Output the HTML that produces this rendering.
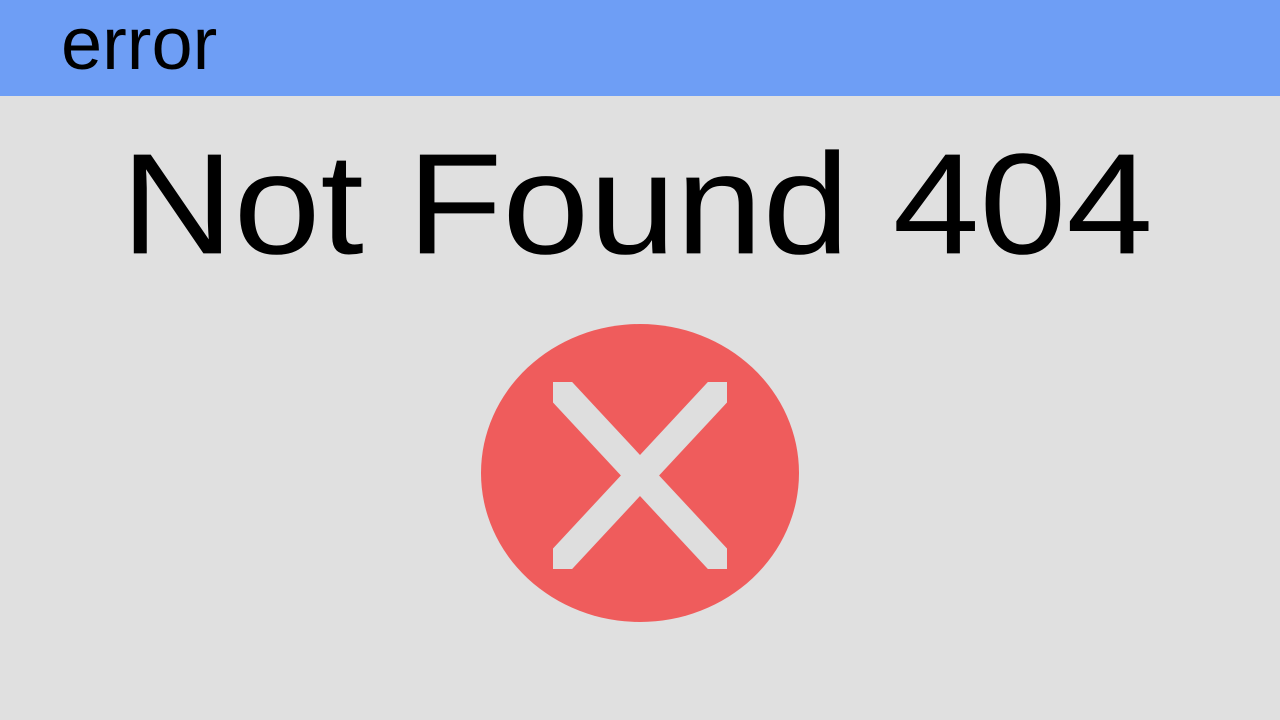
<!DOCTYPE html>
<html><head><meta charset="utf-8"><style>
html,body{margin:0;padding:0;width:1280px;height:720px;overflow:hidden;background:#e0e0e0;font-family:"Liberation Sans",sans-serif;}
.hdr{position:absolute;left:0;top:0;width:1280px;height:96px;background:#6e9ef5;}
.err{position:absolute;left:61px;top:44px;font-size:74px;line-height:0;color:#000;}
.title{position:absolute;left:121px;top:200px;font-size:156px;line-height:0;color:#000;white-space:nowrap;transform:scaleY(0.92);transform-origin:0 58px;}
svg{position:absolute;left:0;top:0;}
</style></head><body>
<div class="hdr"></div>
<div class="err">error</div>
<div class="title">Not Found 404</div>
<svg width="1280" height="720">
<defs><clipPath id="c"><rect x="553" y="382" width="174" height="187"/></clipPath></defs>
<ellipse cx="640" cy="473" rx="159" ry="149" fill="#ef5c5c"/>
<g clip-path="url(#c)" stroke="#dedede" stroke-width="28">
<line x1="534.4" y1="362" x2="745.6" y2="589"/>
<line x1="745.6" y1="362" x2="534.4" y2="589"/>
</g>
</svg>
</body></html>
